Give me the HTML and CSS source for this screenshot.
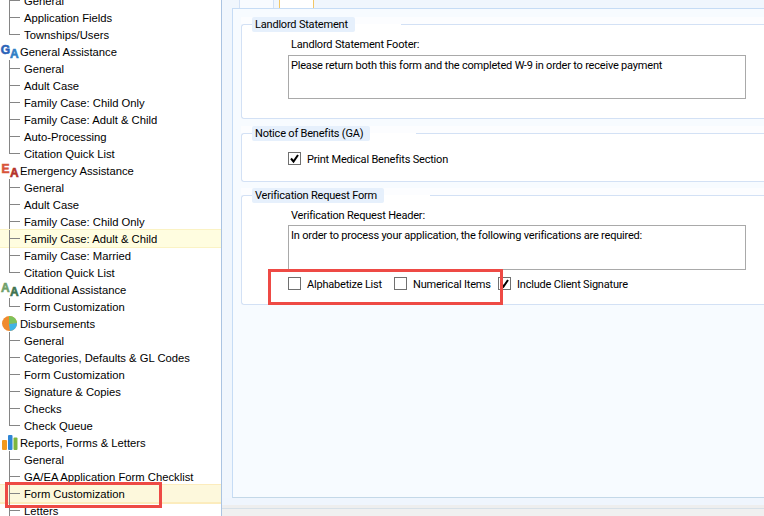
FILE: index.html
```html
<!DOCTYPE html>
<html lang="en">
<head>
<meta charset="utf-8">
<title>Form Customization</title>
<link rel="stylesheet" href="styles.css">
</head>
<body>
<div class="app">
  <nav class="tree">
    <div class="tree-inner">
      <div class="row item">General</div>
      <div class="row item">Application Fields</div>
      <div class="row item last">Townships/Users</div>

      <div class="row head">
        <svg class="icon" viewBox="0 0 17 17"><text class="ic-l ga1" x="-0.3" y="11">G</text><text class="ic-l ga2" x="9.05" y="15">A</text></svg>
        General Assistance
      </div>
      <div class="row item">General</div>
      <div class="row item">Adult Case</div>
      <div class="row item">Family Case: Child Only</div>
      <div class="row item">Family Case: Adult &amp; Child</div>
      <div class="row item">Auto-Processing</div>
      <div class="row item last">Citation Quick List</div>

      <div class="row head">
        <svg class="icon" viewBox="0 0 17 17"><text class="ic-l ea1" x="0.5" y="11">E</text><text class="ic-l ea2" x="9.05" y="15">A</text></svg>
        Emergency Assistance
      </div>
      <div class="row item">General</div>
      <div class="row item">Adult Case</div>
      <div class="row item">Family Case: Child Only</div>
      <div class="row item hl">Family Case: Adult &amp; Child</div>
      <div class="row item">Family Case: Married</div>
      <div class="row item last">Citation Quick List</div>

      <div class="row head">
        <svg class="icon" viewBox="0 0 17 17"><text class="ic-l aa1" x="0" y="11">A</text><text class="ic-l aa2" x="9.05" y="15">A</text></svg>
        Additional Assistance
      </div>
      <div class="row item last">Form Customization</div>

      <div class="row head">
        <svg class="icon" viewBox="0 0 17 17">
          <circle cx="8.5" cy="8.5" r="7.5" fill="#f08a2c"/>
          <path d="M8 1 A7.5 7.5 0 0 1 16 8 L8 9 Z" fill="#7cc35c"/>
          <path d="M8 9 L16 8 A7.5 7.5 0 0 1 9 16 Z" fill="#3fb4e6"/>
        </svg>
        Disbursements
      </div>
      <div class="row item">General</div>
      <div class="row item">Categories, Defaults &amp; GL Codes</div>
      <div class="row item">Form Customization</div>
      <div class="row item">Signature &amp; Copies</div>
      <div class="row item">Checks</div>
      <div class="row item last">Check Queue</div>

      <div class="row head">
        <svg class="icon" viewBox="0 0 17 17">
          <rect x="1" y="6" width="5" height="10" rx="1" fill="#f39a1d"/>
          <rect x="7" y="1" width="4.5" height="15" rx="1" fill="#2f86d6"/>
          <rect x="12.5" y="3.5" width="4" height="12.5" rx="1" fill="#7db53f"/>
        </svg>
        Reports, Forms &amp; Letters
      </div>
      <div class="row item">General</div>
      <div class="row item">GA/EA Application Form Checklist</div>
      <div class="row item hl strong">Form Customization</div>
      <div class="row item">Letters</div>
    </div>
  </nav>

  <main class="content">
    <div class="tabs">
      <span class="tab"></span>
      <span class="tab active"></span>
    </div>
    <div class="panel">
      <section class="section s1">
        <fieldset class="group g1">
          <legend>Landlord Statement</legend>
          <div class="field-label l1">Landlord Statement Footer:</div>
          <div class="textbox t1">Please return both this form and the completed W-9 in order to receive payment</div>
        </fieldset>
      </section>
      <section class="section">
        <fieldset class="group g2">
          <legend>Notice of Benefits (GA)</legend>
          <div class="checks c1">
            <div class="check"><span class="box"><svg viewBox="0 0 11 11"><path class="tick" d="M2 5.5 L4.5 8.5 L9 2"/></svg></span>Print Medical Benefits Section</div>
          </div>
        </fieldset>
      </section>
      <section class="section">
        <fieldset class="group g3">
          <legend>Verification Request Form</legend>
          <div class="field-label l3">Verification Request Header:</div>
          <div class="textbox t3">In order to process your application, the following verifications are required:</div>
          <div class="checks c3">
            <div class="check w1"><span class="box"></span>Alphabetize List</div>
            <div class="check w2"><span class="box"></span>Numerical Items</div>
            <div class="check"><span class="box"><svg viewBox="0 0 11 11"><path class="tick" d="M2 5.5 L4.5 8.5 L9 2"/></svg></span>Include Client Signature</div>
          </div>
        </fieldset>
      </section>
    </div>
    <div class="footer-strip"></div>
    <div class="footer"></div>
  </main>
</div>
<div class="callout callout-tree"></div>
<div class="callout callout-form"></div>
</body>
</html>
```

FILE: styles.css
```css
* { box-sizing: border-box; }
html, body { margin: 0; padding: 0; height: 516px; overflow: hidden; }
body {
  position: relative;
  background: #f0f0f0;
  color: #000;
  font-family: "Liberation Sans", Arial, sans-serif;
  font-size: 11.25px;
  line-height: 14px;
}
.app { display: flex; width: 764px; height: 516px; overflow: hidden; }

/* tree */
.tree {
  flex: 0 0 222px;
  height: 516px;
  background: #fff;
  border-right: 1px solid #abc4e2;
  overflow: hidden;
}
.tree-inner { margin-top: -8px; }
.row {
  height: 17px;
  display: flex;
  align-items: center;
  white-space: nowrap;
}
.item {
  padding-left: 24px;
  background:
    linear-gradient(#858585, #858585) 9px 0 / 1px 100% no-repeat,
    linear-gradient(#858585, #858585) 10px 8px / 10px 1px no-repeat;
}
.item.last {
  background:
    linear-gradient(#858585, #858585) 9px 0 / 1px 9px no-repeat,
    linear-gradient(#858585, #858585) 10px 8px / 10px 1px no-repeat;
}
.item.hl {
  background:
    linear-gradient(#858585, #858585) 9px 0 / 1px 100% no-repeat,
    linear-gradient(#858585, #858585) 10px 8px / 10px 1px no-repeat,
    #fffde0;
  box-shadow: 0 -1px 0 #fbf3c4, 0 1px 0 #fbf3c4;
}
.item.hl.strong {
  background:
    linear-gradient(#858585, #858585) 9px 0 / 1px 100% no-repeat,
    linear-gradient(#858585, #858585) 10px 8px / 10px 1px no-repeat,
    #fdf8dc;
  box-shadow: 0 -1px 0 #fcecbd, 0 2px 0 #fcecbd;
}
.head { padding-left: 1px; gap: 2px; }
.icon { flex: 0 0 17px; width: 17px; height: 17px; overflow: visible; }
.ic-l {
  font-family: "Liberation Sans", sans-serif;
  font-weight: 700;
  font-size: 12px;
  stroke-width: 0.6px;
}
.ga1 { fill: #2a63b8; stroke: #2a63b8; }
.ga2 { fill: #2f7fc6; stroke: #2f7fc6; }
.ea1 { fill: #d8543a; stroke: #d8543a; }
.ea2 { fill: #b5322a; stroke: #b5322a; }
.aa1 { fill: #6f9f6a; stroke: #6f9f6a; }
.aa2 { fill: #3f7350; stroke: #3f7350; }

/* content */
.content {
  flex: 1 1 auto;
  min-width: 0;
  display: flex;
  flex-direction: column;
  background: #f0f6fd;
  font-family: Roboto, "Liberation Sans", sans-serif;
  font-size: 11px;
  letter-spacing: -0.2px;
}
.tabs {
  flex: 0 0 8px;
  display: flex;
  padding-left: 17px;
  gap: 5px;
}
.tab {
  width: 35px;
  height: 8px;
  background: #f8fbff;
  border-left: 1px solid #d3e1f5;
  border-right: 1px solid #d3e1f5;
}
.tab.active {
  background: #fff;
  border-left: 1px solid #f3c766;
  border-right: 1px solid #f3c766;
}
.panel {
  height: 490px;
  margin-left: 10px;
  margin-right: -10px;
  padding: 8px 0 0 8px;
  background: #f7fbff;
  border: 1px solid #c6dcf5;
  border-bottom-color: #c4d8e8;
}
.section { background: #fcfdff; margin-bottom: 6px; }
.s1 { margin-bottom: 7px; }
.group {
  margin: 0;
  padding: 0 0 0 46px;
  min-width: 0;
  background: #fff;
  border: 1px solid #d3e1f5;
  border-right: 0;
  border-radius: 3px 0 0 3px;
}
.group legend {
  margin-left: 10px;
  margin-right: 0;
  padding: 0 7px 0 3px;
  height: 15px;
  line-height: 15px;
  background: #e6f0fc;
  border-radius: 2px;
  position: relative;
  left: -46px;
}
.g1 { height: 102px; }
.g2 { height: 56px; }
.g3 { height: 117px; }
.l1 { margin-top: 6px; margin-left: 3px; }
.l3 { margin-top: 6px; margin-left: 3px; }
.textbox {
  width: 458px;
  padding: 3px 2px;
  background: #fff;
  border: 1px solid #a9a9a9;
}
.t1 { height: 44px; margin-top: 3px; }
.t3 { height: 45px; margin-top: 2px; }
.checks { display: flex; }
.c1 { margin-top: 11px; }
.c3 { margin-top: 7px; }
.check {
  display: flex;
  align-items: flex-start;
  height: 13px;
  line-height: 15px;
  white-space: nowrap;
}
.w1 { width: 106px; }
.w2 { width: 104px; }
.box {
  flex: 0 0 13px;
  width: 13px;
  height: 13px;
  margin-right: 6px;
  background: #fff;
  border: 1px solid #707070;
  display: flex;
  align-items: center;
  justify-content: center;
}
.box svg { width: 11px; height: 11px; }
.tick { fill: none; stroke: #000; stroke-width: 2; }
.footer-strip { flex: 0 0 7px; background: #eff5fd; }
.footer {
  flex: 1 1 auto;
  background: #f0f0f0;
  border-top: 3px solid #eeeeee;
  box-shadow: inset 0 1px 0 #d6e0e8;
}

/* annotation rectangles over the screenshot */
.callout { position: absolute; border: 3px solid #ee4a45; }
.callout-tree { left: 5px; top: 482px; width: 157px; height: 26px; }
.callout-form { left: 268px; top: 269px; width: 235px; height: 36px; }
```
